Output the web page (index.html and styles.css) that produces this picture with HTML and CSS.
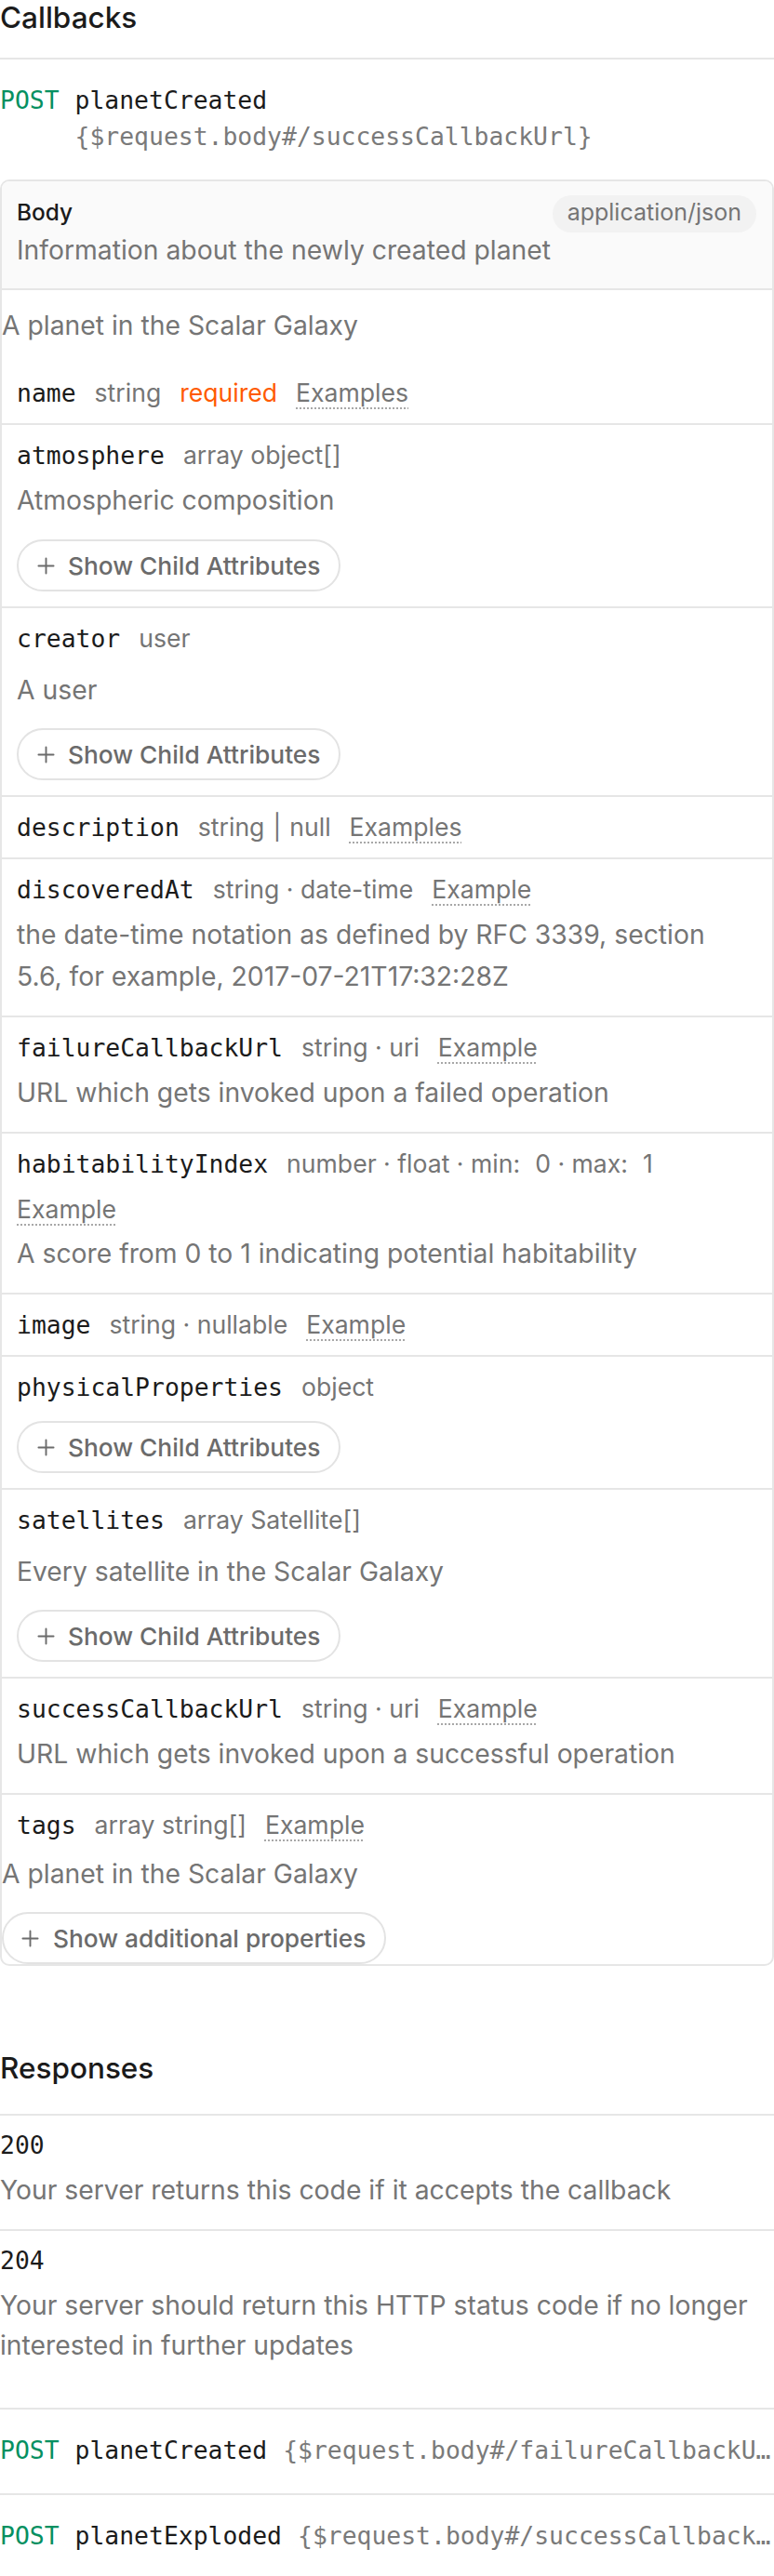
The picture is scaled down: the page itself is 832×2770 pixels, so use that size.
FILE: index.html
```html
<!DOCTYPE html>
<html lang="en">
<head>
<meta charset="utf-8">
<title>Callbacks</title>
<link rel="stylesheet" href="styles.css">
</head>
<body>
<section class="callbacks">
  <h2 class="section-title">Callbacks</h2>

  <div class="callback">
    <div class="cb-head">
      <span class="method">POST</span>
      <span class="cb-title">
        <span class="cb-name">planetCreated</span>
        <span class="cb-path">{$request.body#/successCallbackUrl}</span>
      </span>
    </div>

    <div class="schema-box">
      <div class="schema-head">
        <div class="schema-head-row">
          <span class="schema-label">Body</span>
          <span class="content-type">application/json</span>
        </div>
        <p class="schema-head-desc">Information about the newly created planet</p>
      </div>

      <p class="schema-desc">A planet in the Scalar Galaxy</p>

      <div class="prop">
        <div class="prop-head">
          <span class="prop-name">name</span>
          <span class="prop-type">string</span>
          <span class="prop-required">required</span>
          <span class="prop-example">Examples</span>
        </div>
      </div>

      <div class="prop">
        <div class="prop-head">
          <span class="prop-name">atmosphere</span>
          <span class="prop-type">array object[]</span>
        </div>
        <p class="prop-desc">Atmospheric composition</p>
        <button class="child-btn" type="button"><svg class="plus" viewBox="0 0 20 20"><path d="M10 1.5v17M1.5 10h17"/></svg>Show Child Attributes</button>
      </div>

      <div class="prop prop-ref">
        <div class="prop-head">
          <span class="prop-name">creator</span>
          <span class="prop-type">user</span>
        </div>
        <p class="prop-desc">A user</p>
        <button class="child-btn" type="button"><svg class="plus" viewBox="0 0 20 20"><path d="M10 1.5v17M1.5 10h17"/></svg>Show Child Attributes</button>
      </div>

      <div class="prop">
        <div class="prop-head">
          <span class="prop-name">description</span>
          <span class="prop-type">string<span class="type-sep">|</span>null</span>
          <span class="prop-example">Examples</span>
        </div>
      </div>

      <div class="prop">
        <div class="prop-head">
          <span class="prop-name">discoveredAt</span>
          <span class="prop-type">string · date-time</span>
          <span class="prop-example">Example</span>
        </div>
        <p class="prop-desc">the date-time notation as defined by RFC 3339, section 5.6, for example, 2017-07-21T17:32:28Z</p>
      </div>

      <div class="prop">
        <div class="prop-head">
          <span class="prop-name">failureCallbackUrl</span>
          <span class="prop-type">string · uri</span>
          <span class="prop-example">Example</span>
        </div>
        <p class="prop-desc">URL which gets invoked upon a failed operation</p>
      </div>

      <div class="prop">
        <div class="prop-head">
          <span class="prop-name">habitabilityIndex</span>
          <span class="prop-type">number · float · min:<span class="num">0</span> · max:<span class="num">1</span></span>
          <span class="prop-example">Example</span>
        </div>
        <p class="prop-desc">A score from 0 to 1 indicating potential habitability</p>
      </div>

      <div class="prop">
        <div class="prop-head">
          <span class="prop-name">image</span>
          <span class="prop-type">string · nullable</span>
          <span class="prop-example">Example</span>
        </div>
      </div>

      <div class="prop">
        <div class="prop-head">
          <span class="prop-name">physicalProperties</span>
          <span class="prop-type">object</span>
        </div>
        <button class="child-btn" type="button"><svg class="plus" viewBox="0 0 20 20"><path d="M10 1.5v17M1.5 10h17"/></svg>Show Child Attributes</button>
      </div>

      <div class="prop prop-ref">
        <div class="prop-head">
          <span class="prop-name">satellites</span>
          <span class="prop-type">array Satellite[]</span>
        </div>
        <p class="prop-desc">Every satellite in the Scalar Galaxy</p>
        <button class="child-btn" type="button"><svg class="plus" viewBox="0 0 20 20"><path d="M10 1.5v17M1.5 10h17"/></svg>Show Child Attributes</button>
      </div>

      <div class="prop">
        <div class="prop-head">
          <span class="prop-name">successCallbackUrl</span>
          <span class="prop-type">string · uri</span>
          <span class="prop-example">Example</span>
        </div>
        <p class="prop-desc">URL which gets invoked upon a successful operation</p>
      </div>

      <div class="prop">
        <div class="prop-head">
          <span class="prop-name">tags</span>
          <span class="prop-type">array string[]</span>
          <span class="prop-example">Example</span>
        </div>
      </div>

      <div class="schema-additional">
        <p class="schema-additional-desc">A planet in the Scalar Galaxy</p>
        <button class="child-btn" type="button"><svg class="plus" viewBox="0 0 20 20"><path d="M10 1.5v17M1.5 10h17"/></svg>Show additional properties</button>
      </div>
    </div>

    <div class="responses">
      <h3 class="responses-title">Responses</h3>
      <div class="responses-list">
        <div class="resp">
          <div class="resp-code">200</div>
          <p class="resp-desc">Your server returns this code if it accepts the callback</p>
        </div>
        <div class="resp">
          <div class="resp-code">204</div>
          <p class="resp-desc">Your server should return this HTTP status code if no longer interested in further updates</p>
        </div>
      </div>
    </div>
  </div>

  <div class="callback collapsed">
    <div class="cb-head">
      <span class="method">POST</span>
      <span class="cb-title">
        <span class="cb-name">planetCreated</span>
        <span class="cb-path">{$request.body#/failureCallbackUrl}</span>
      </span>
    </div>
  </div>

  <div class="callback collapsed">
    <div class="cb-head">
      <span class="method">POST</span>
      <span class="cb-title">
        <span class="cb-name">planetExploded</span>
        <span class="cb-path">{$request.body#/successCallbackUrl}</span>
      </span>
    </div>
  </div>
</section>
</body>
</html>
```

FILE: styles.css
```css
* { box-sizing: border-box; }

html, body {
  margin: 0;
  background: #ffffff;
}

body {
  color: #1b1b1b;
  font-family: Inter, "Noto Sans", sans-serif;
}

p { margin: 0; }

.section-title {
  margin: 0;
  padding-bottom: 24px;
  font-size: 31.5px;
  line-height: 38px;
  font-weight: 500;
  color: #1b1b1b;
}

/* ---------- callback headers ---------- */
.callback {
  border-top: 2px solid #e6e6e6;
}

.cb-head {
  display: flex;
  column-gap: 17px;
  padding: 24px 0 27px;
  font-family: "DejaVu Sans Mono", "Liberation Mono", monospace;
  font-size: 26.4px;
  line-height: 39px;
}

.method {
  flex: none;
  color: #069061;
}

.cb-title {
  flex: 1;
  min-width: 0;
  display: flex;
  flex-wrap: wrap;
  column-gap: 17px;
}

.cb-name {
  flex: none;
  white-space: nowrap;
  color: #1b1b1b;
}

.cb-path {
  color: #7a7a7a;
  white-space: nowrap;
}

.collapsed .cb-title {
  flex-wrap: nowrap;
}

.collapsed .cb-path {
  min-width: 0;
  overflow: hidden;
  text-overflow: ellipsis;
}

/* ---------- schema box ---------- */
.schema-box {
  border: 2px solid #e6e6e6;
  border-radius: 10px;
}

.schema-head {
  background: #fafafa;
  border-bottom: 2px solid #e6e6e6;
  border-radius: 8px 8px 0 0;
  padding: 15px 17px 22px 16px;
}

.schema-head-row {
  display: flex;
  align-items: center;
  justify-content: space-between;
  height: 40px;
}

.schema-label {
  margin-bottom: 4px;
  font-size: 24.4px;
  line-height: 30px;
  font-weight: 500;
  color: #1b1b1b;
}

.content-type {
  height: 40px;
  padding: 0 16px 4px;
  border-radius: 20px;
  background: #f2f2f2;
  color: #757575;
  font-size: 25px;
  line-height: 36px;
}

.schema-head-desc {
  margin-top: 1px;
  font-size: 28.3px;
  line-height: 37px;
  color: #757575;
}

.schema-desc {
  padding: 15px 0 17px;
  font-size: 28.3px;
  line-height: 46px;
  color: #757575;
}

/* ---------- properties ---------- */
.prop {
  padding: 16px 16px 16px;
}

.prop + .prop {
  border-top: 2px solid #e6e6e6;
}

.prop-head {
  display: flex;
  flex-wrap: wrap;
  align-items: baseline;
  column-gap: 20px;
  row-gap: 16px;
  line-height: 32px;
}

.prop-name {
  font-family: "DejaVu Sans Mono", "Liberation Mono", monospace;
  font-size: 26.4px;
  color: #1b1b1b;
}

.prop-type,
.prop-required,
.prop-example {
  font-size: 26.6px;
  color: #757575;
}

.prop-required {
  color: #ff5a00;
}

.prop-example {
  text-decoration-line: underline;
  text-decoration-style: dotted;
  text-decoration-color: #a8a8a8;
  text-decoration-thickness: 2px;
  text-underline-offset: 6px;
}

.type-sep {
  margin: 0 9px;
}

.num {
  margin-left: 16px;
}

.prop-desc {
  margin: 10px 0 3px;
  font-size: 28.3px;
  line-height: 45px;
  color: #757575;
}

.prop-ref .prop-desc {
  margin-top: 17px;
}

.child-btn {
  display: flex;
  align-items: center;
  gap: 14px;
  margin-top: 19px;
  height: 56px;
  padding: 0 20px;
  border: 2px solid #e3e3e3;
  border-radius: 28px;
  background: #ffffff;
  color: #6b6b6b;
  font-family: Inter, "Noto Sans", sans-serif;
  font-size: 26.3px;
  font-weight: 500;
  white-space: nowrap;
}

.prop-head + .child-btn {
  margin-top: 20px;
}

.prop-ref .child-btn {
  margin-top: 18px;
}

.plus {
  width: 19px;
  height: 19px;
  flex: none;
  fill: none;
  stroke: currentColor;
  stroke-width: 2;
  stroke-linecap: round;
}

.schema-additional-desc {
  font-size: 28.3px;
  line-height: 40px;
  color: #757575;
}

.schema-additional .child-btn {
  margin-top: 21px;
  padding: 0 20px 0 19px;
  gap: 15px;
}

/* ---------- responses ---------- */
.responses {
  margin-top: 91px;
}

.responses-title {
  margin: 0;
  padding-bottom: 30px;
  font-size: 31.5px;
  line-height: 38px;
  font-weight: 500;
  color: #1b1b1b;
}

.responses-list {
  padding-bottom: 25px;
}

.resp {
  border-top: 2px solid #e6e6e6;
  padding: 16px 0 20px;
}

.resp-code {
  font-family: "DejaVu Sans Mono", "Liberation Mono", monospace;
  font-size: 26.4px;
  line-height: 32px;
  color: #1b1b1b;
}

.resp-desc {
  margin-top: 11px;
  font-size: 28.3px;
  line-height: 43px;
  color: #757575;
}
```
